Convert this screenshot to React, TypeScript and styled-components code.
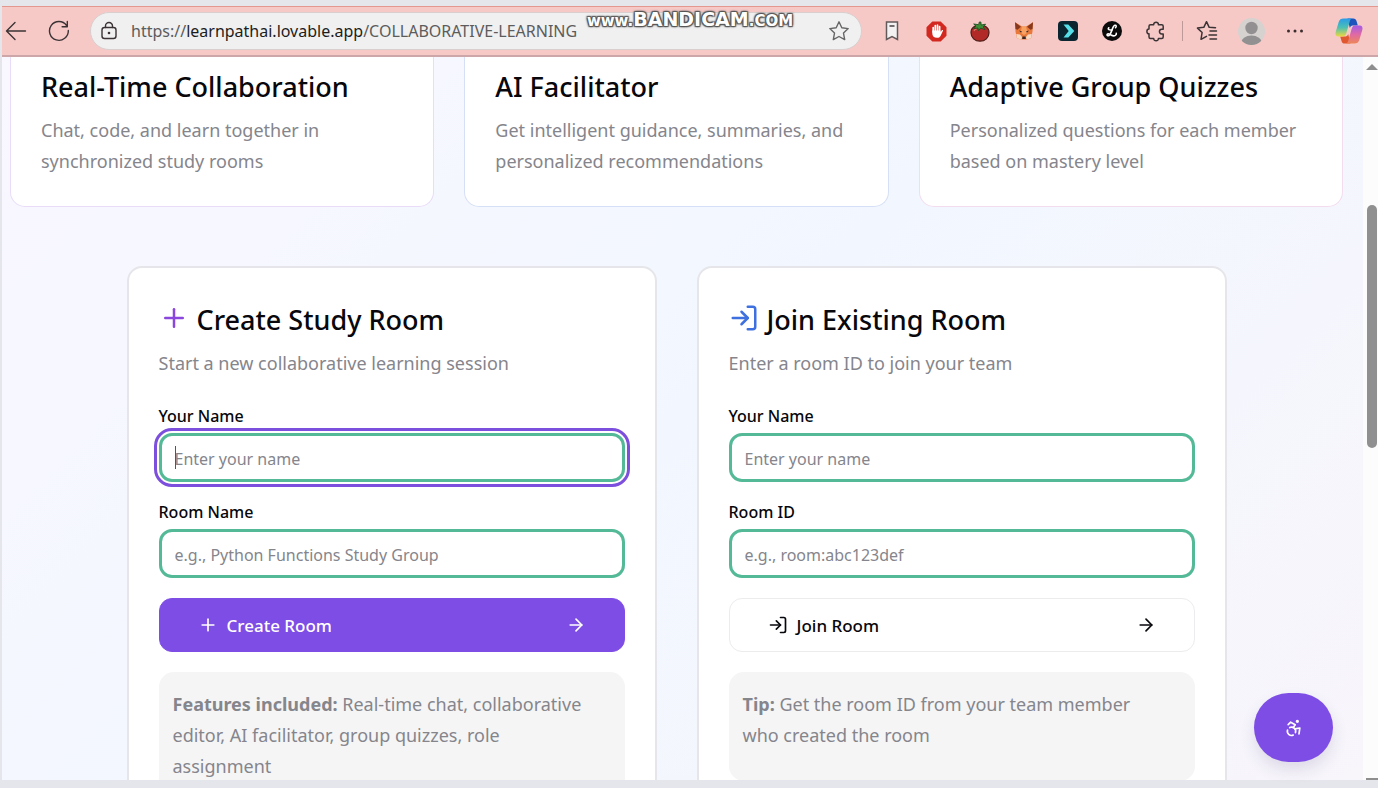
import React from "react";
import styled, { createGlobalStyle, css } from "styled-components";
import { Accessibility, ArrowRight, LogIn, Plus } from "lucide-react";

const GlobalStyle = createGlobalStyle`
  *, *::before, *::after { box-sizing: border-box; }
  body {
    margin: 0;
    background: #e5e6eb;
    color: #07070c;
    font-family: "Noto Sans", "Open Sans", sans-serif;
  }
  h2, h3, p { margin: 0; }
  button, input { font: inherit; color: inherit; }
  button { cursor: pointer; }
`;

const Browser = styled.div`
  display: flex;
  flex-direction: column;
  height: 100vh;
  padding: 6px 0 8px 2px;
  overflow: hidden;
`;

/* Browser toolbar */

const Toolbar = styled.header`
  position: relative;
  flex: none;
  display: flex;
  align-items: center;
  height: 51px;
  padding-right: 7px;
  background: #f6c9c7;
  border-top: 1px solid #e2978f;
  border-bottom: 2px solid #cda6a9;
`;

const ToolButton = styled.button<{ $width?: number }>`
  flex: none;
  display: grid;
  place-items: center;
  width: ${(p) => p.$width ?? 44}px;
  height: 40px;
  padding: 0;
  border: 0;
  background: none;
`;

const AddressBar = styled.div`
  flex: 1;
  min-width: 0;
  display: flex;
  align-items: center;
  height: 38px;
  margin: 0 8px 0 2px;
  background: #f0f0f0;
  border: 1px solid #d9cfcf;
  border-radius: 19px;
`;

const Url = styled.span`
  flex: 1;
  min-width: 0;
  margin-left: 4px;
  overflow: hidden;
  white-space: nowrap;
  font-size: 16px;
  line-height: 24px;
  color: #5c5c5c;

  b { font-weight: 400; color: #1d1d1d; }
`;

const ToolDivider = styled.span`
  flex: none;
  width: 1px;
  height: 20px;
  margin: 0 2px 0 4px;
  background: #bd9998;
`;

const CopilotSlot = styled.div`
  margin-left: 10px;
`;

const Watermark = styled.div`
  position: absolute;
  top: 2px;
  left: 0;
  right: 0;
  text-align: center;
  font-family: "DejaVu Sans", sans-serif;
  font-weight: 700;
  font-size: 15px;
  line-height: 20px;
  color: #fff;
  pointer-events: none;
  text-shadow: 1px 1px 1px #555, -1px -1px 1px #555, 1px -1px 1px #555,
    -1px 1px 1px #555, 0 0 3px #777, 0 0 3px #777;

  strong { font-size: 19px; }
  small { font-size: 15px; }
`;

/* Page viewport */

const Viewport = styled.div`
  position: relative;
  flex: 1;
  min-height: 0;
  display: flex;
`;

const Page = styled.main`
  flex: 1;
  min-width: 0;
  padding: 0 20px 0 8px;
  overflow: hidden;
  background: linear-gradient(135deg, #f9f7ff 0%, #f2f7ff 50%, #f8f5fb 100%);
`;

const Features = styled.section`
  display: grid;
  grid-template-columns: repeat(3, minmax(0, 1fr));
  gap: 30px;
`;

const FeatureCard = styled.article<{ $border: string }>`
  display: flex;
  flex-direction: column;
  gap: 8px;
  padding: 10px 30px 29px;
  background: #fff;
  border: 1px solid ${(p) => p.$border};
  border-top: 0;
  border-radius: 0 0 15px 15px;
`;

const Title = styled.h2`
  display: flex;
  align-items: center;
  gap: 8px;
  font-size: 27px;
  font-weight: 500;
  line-height: 40px;
  white-space: nowrap;

  svg { margin-bottom: 4px; }
`;

const Text = styled.p`
  font-size: 18px;
  line-height: 31px;
  color: #85858c;

  strong { font-weight: 700; }
`;

const Rooms = styled.section`
  display: grid;
  grid-template-columns: repeat(2, minmax(0, 1fr));
  gap: 40px;
  max-width: 1100px;
  margin: 59px auto 0;
`;

const RoomCard = styled.form`
  display: flex;
  flex-direction: column;
  padding: 32px 30px 40px;
  background: #fff;
  border: 2px solid #e6e6ea;
  border-radius: 15px;
`;

const CardHead = styled.header`
  display: flex;
  flex-direction: column;
  gap: 8px;
  margin-bottom: 27px;
`;

const Fields = styled.div`
  display: flex;
  flex-direction: column;
  gap: 20px;
`;

const Field = styled.div`
  display: flex;
  flex-direction: column;
  gap: 7px;
`;

const Label = styled.label`
  font-size: 16px;
  font-weight: 500;
  line-height: 20px;
`;

const InputWrap = styled.div`
  position: relative;
  display: flex;
`;

const Input = styled.input<{ $focused?: boolean }>`
  width: 100%;
  height: 49px;
  padding: 2px 13px 0;
  background: #fff;
  border: 3px solid #54b997;
  border-radius: 13px;
  font-size: 16px;
  outline: none;
  ${(p) =>
    p.$focused &&
    css`
      outline: 3px solid #7c4fdd;
      outline-offset: 2px;
    `}

  &::placeholder { color: #85858c; opacity: 1; }
`;

const Caret = styled.span`
  position: absolute;
  top: 13px;
  left: 16px;
  width: 1px;
  height: 23px;
  background: #555;
`;

const ActionButton = styled.button<{ $primary?: boolean }>`
  display: flex;
  align-items: center;
  gap: 9px;
  height: 54px;
  padding: 0 38px;
  font-size: 17px;
  font-weight: 500;
  color: ${(p) => (p.$primary ? "#fff" : "#07070c")};
  background: ${(p) => (p.$primary ? "#7e4de6" : "#fff")};
  border: 1px solid ${(p) => (p.$primary ? "#7e4de6" : "#ececef")};
  border-radius: 13px;

  svg:last-child { margin-left: auto; }
`;

const Note = styled.aside`
  min-height: 109px;
  padding: 17px 36px 16px 14px;
  background: #f5f5f6;
  border-radius: 15px;
`;

const AccessButton = styled.button`
  position: absolute;
  right: 45px;
  bottom: 18px;
  display: grid;
  place-items: center;
  width: 79px;
  height: 69px;
  padding: 0;
  color: #fff;
  background: #7e4de6;
  border: 0;
  border-radius: 35px;
  box-shadow: 0 8px 16px rgba(40, 30, 90, 0.12);
`;

const ScrollTrack = styled.div`
  flex: none;
  display: flex;
  flex-direction: column;
  align-items: center;
  width: 15px;
  padding: 7px 0 0 3px;
  background: #fcfcfc;
  overflow: hidden;
`;

const ScrollThumb = styled.div`
  width: 10px;
  height: 34%;
  margin-top: 135px;
  margin-bottom: auto;
  background: #909090;
  border-radius: 5px;
`;

const ScrollEnd = styled.div`
  width: 12px;
  height: 2px;
  background: #8e8e8e;
`;

/* Toolbar drawings */

const line = {
  fill: "none",
  stroke: "#3b3335",
  strokeWidth: 1.4,
  strokeLinecap: "round" as const,
  strokeLinejoin: "round" as const,
};

const BackIcon = () => (
  <svg width="22" height="22" viewBox="0 0 22 22" {...line}>
    <path d="M20.500 11H1.500M10 2.500 1.500 11l8.500 8.500" />
  </svg>
);

const ReloadIcon = () => (
  <svg width="22" height="22" viewBox="0 0 22 22" {...line}>
    <path d="M20.300 10.500A9.400 9.400 0 1 1 18.600 5.500M19.300 1.500v5.200h-5.200" />
  </svg>
);

const LockIcon = () => (
  <svg width="18" height="20" viewBox="0 0 18 20" {...line}>
    <rect x="2" y="6.500" width="14" height="11" rx="2.500" />
    <path d="M5.500 6.500V5a3.500 3.500 0 0 1 7 0v1.500" />
    <circle cx="9" cy="12" r="1.300" fill="#3b3335" stroke="none" />
  </svg>
);

const StarIcon = () => (
  <svg width="22" height="22" viewBox="0 0 22 22" {...line} stroke="#666">
    <path d="m11 1.800 2.800 5.900 6.400.9-4.700 4.500 1.200 6.500-5.700-3.100-5.700 3.100 1.200-6.500L1.800 8.600l6.400-.9z" />
  </svg>
);

const BookmarkIcon = () => (
  <svg width="14" height="20" viewBox="0 0 14 20">
    <path d="M1.500 1h11v17.500L7 15.500 1.500 18.500z" fill="#f2f2f2" stroke="#62595a" strokeWidth="1.500" />
    <path d="M4.500 5h5" stroke="#3b3335" strokeWidth="1.400" />
  </svg>
);

const BlockerIcon = () => (
  <svg width="21" height="21" viewBox="0 0 21 21">
    <path d="M6.300.5h8.400l5.800 5.800v8.400l-5.800 5.800H6.300L.5 14.700V6.300z" fill="#d2281f" />
    <g stroke="#fff" strokeWidth="1.700" strokeLinecap="round">
      <path d="M7.200 11V6.500M9.300 10V4.600M11.500 10V4.200M13.600 11V5.600" />
    </g>
    <path d="M6.300 9.500h8.200v1.800l1.300-2.100c.5-.6 1.400-.2 1.200.6l-2.500 5.200c-.7 1.300-1.700 1.800-3.500 1.800-3 0-4.700-1.600-4.700-4.300z" fill="#fff" />
  </svg>
);

const TomatoIcon = () => (
  <svg width="20" height="21" viewBox="0 0 20 21">
    <path d="M10 5.500c5-2 9 1 9 6.200 0 5-4 8.500-9 8.500s-9-3.500-9-8.500c0-5.200 4-8.200 9-6.200z" fill="#b22a27" stroke="#4b1f19" strokeWidth="1.200" />
    <path d="M4 10c.6-1.400 1.500-2 2.700-2.100" stroke="#db7068" strokeWidth="1.200" fill="none" />
    <path d="M9.300 1h1.500l.4 3 4.300-.8-2.200 2.600 1.500 2.800-4.100-1.500L8.500 9.500 7.800 7 4 7.500 6 5 3.700 3l5 .7z" fill="#3b8f35" stroke="#204c20" strokeWidth=".9" />
  </svg>
);

const FoxIcon = () => (
  <svg width="20" height="20" viewBox="0 0 20 20">
    <path d="m1 1.200 7 4.300h4l7-4.300-.5 9.300-1.300 6.500-3.700 1.500h-7L2.800 17 1.500 10.500z" fill="#e9793a" />
    <path d="m1 1.200 6 4.500-3.500 3L1.500 8zM19 1.200l-6 4.500 3.500 3 2-.7z" fill="#87381f" />
    <path d="m8 5.500-1.500 6L10 14l3.500-2.500-1.500-6z" fill="#f7a263" />
    <path d="m2.300 13 3.700.5L8 16l-.5 2.500h-1L2.800 17zM17.700 13l-3.700.5-2 2.500.5 2.500h1l3.700-1.500z" fill="#f5d9c3" />
    <path d="m5 9.500 3 1-1 1.300zM15 9.500l-3 1 1 1.300zM8.500 15.500h3l.3 2.500H8.200z" fill="#32272a" />
  </svg>
);

const ChevronAppIcon = () => (
  <svg width="20" height="20" viewBox="0 0 20 20">
    <rect width="20" height="20" rx="4" fill="#0b2530" />
    <path d="M5.500 3.500h4.800l6 6.500-6 6.500H5.500l5.200-6.500z" fill="#55dfe8" />
  </svg>
);

const ScriptAppIcon = () => (
  <svg width="20" height="20" viewBox="0 0 20 20">
    <circle cx="10" cy="10" r="10" fill="#0c0b0c" />
    <path d="M13.500 6.700c1.200-1.200.8-2.700-.6-2.400C10 5 9.500 14.500 6.300 14.700c-1.800 0-1.500-2 0-1.800 2.700.4 4.500 3.200 7 1.500.8-.6 1.200-1.400 1-2.200M10.300 8.800c-2.800.6-5-.4-3.500-2" fill="none" stroke="#fff" strokeWidth="1.600" strokeLinecap="round" />
  </svg>
);

const PuzzleIcon = () => (
  <svg width="20" height="21" viewBox="0 0 20 21" {...line} strokeWidth={1.5}>
    <path d="M4.500 3.700h3.200c-.2-3.200 5-3.200 4.700 0h3.300q1.500 0 1.500 1.500v3h-1.500c-3 0-3 4.700 0 4.700h1.500v3q0 1.500-1.500 1.500h-3.300c.3 3.200-4.900 3.200-4.700 0H4.500Q3 17.400 3 15.900v-3.100c-2.800 0-2.800-4.700 0-4.700V5.200q0-1.500 1.500-1.500z" />
  </svg>
);

const FavoritesIcon = () => (
  <svg width="22" height="22" viewBox="0 0 22 22" {...line} strokeWidth={1.5}>
    <path d="M19.500 7.800 13.200 7.300 10.500 1.700 7.800 7.300l-6.300.8 4.600 4.400-1.100 6.800 5.500-3M14 11h6.500M13 15h7.500M14 19h6.500" />
  </svg>
);

const AvatarIcon = () => (
  <svg width="27" height="27" viewBox="0 0 27 27">
    <defs>
      <clipPath id="avatar-disc"><circle cx="13.500" cy="13.500" r="13.500" /></clipPath>
    </defs>
    <g clipPath="url(#avatar-disc)">
      <rect width="27" height="27" fill="#d5d2d0" />
      <circle cx="13.500" cy="10" r="6.200" fill="#929090" />
      <ellipse cx="13.500" cy="25" rx="10.500" ry="7.500" fill="#929090" />
    </g>
  </svg>
);

const DotsIcon = () => (
  <svg width="18" height="4" viewBox="0 0 18 4" fill="#3b2d2f">
    <circle cx="2.500" cy="2" r="1.500" />
    <circle cx="9" cy="2" r="1.500" />
    <circle cx="15.500" cy="2" r="1.500" />
  </svg>
);

const CopilotIcon = () => (
  <svg width="28" height="26" viewBox="0 0 28 26">
    <defs>
      <linearGradient id="cp-left" x1="0" y1="0" x2="0" y2="1">
        <stop offset="0" stopColor="#2a9be9" />
        <stop offset=".5" stopColor="#4cc0b5" />
        <stop offset="1" stopColor="#ecd83e" />
      </linearGradient>
      <linearGradient id="cp-right" x1="0" y1="0" x2="0" y2="1">
        <stop offset="0" stopColor="#a55be6" />
        <stop offset=".5" stopColor="#df6aa4" />
        <stop offset="1" stopColor="#ee8758" />
      </linearGradient>
    </defs>
    <path d="M12.500.5h5.700c2 0 2.800 1 3.300 2.600l1.300 4.400h-4.300c-2 0-3 .6-3.700 2.600z" fill="#1e52bd" />
    <path d="M15.500 25.500H9.800c-2 0-2.800-1-3.300-2.600L5.200 18.500h4.300c2 0 3-.6 3.700-2.600z" fill="#e0582f" />
    <path d="M8.500.5h9.200c-1.700 0-2.500 1.300-3 3l-3.300 11.600c-.7 2.300-1.700 3.400-4 3.400H3.500C.8 18.500 0 16.500.7 14L3.700 4C4.500 1.600 6 .5 8.500.5z" fill="url(#cp-left)" />
    <path d="M19.500 25.500h-9.200c1.700 0 2.500-1.300 3-3l3.300-11.600c.7-2.300 1.700-3.400 4-3.400h3.900c2.700 0 3.500 2 2.800 4.500l-3 10c-.8 2.400-2.300 3.500-4.800 3.500z" fill="url(#cp-right)" />
  </svg>
);

const UpArrow = () => (
  <svg width="12" height="6" viewBox="0 0 12 6">
    <path d="M6 0 12 6H0z" fill="#8e8e8e" />
  </svg>
);

const extensions = [
  { name: "Saved pages", Icon: BookmarkIcon },
  { name: "Ad blocker", Icon: BlockerIcon },
  { name: "Tomato timer", Icon: TomatoIcon },
  { name: "Fox wallet", Icon: FoxIcon },
  { name: "Code helper", Icon: ChevronAppIcon },
  { name: "Locator", Icon: ScriptAppIcon },
  { name: "Extensions", Icon: PuzzleIcon },
];

const features = [
  {
    title: "Real-Time Collaboration",
    text: "Chat, code, and learn together in synchronized study rooms",
    border: "#e8dcf8",
  },
  {
    title: "AI Facilitator",
    text: "Get intelligent guidance, summaries, and personalized recommendations",
    border: "#d5dff5",
  },
  {
    title: "Adaptive Group Quizzes",
    text: "Personalized questions for each member based on mastery level",
    border: "#f3dcee",
  },
];

type TextFieldProps = { id: string; label: string; placeholder: string; focused?: boolean };

const TextField = ({ id, label, placeholder, focused }: TextFieldProps) => (
  <Field>
    <Label htmlFor={id}>{label}</Label>
    <InputWrap>
      <Input id={id} type="text" placeholder={placeholder} $focused={focused} />
      {focused && <Caret />}
    </InputWrap>
  </Field>
);

export default function App() {
  return (
    <Browser>
      <GlobalStyle />
      <Toolbar>
        <ToolButton $width={28} aria-label="Back"><BackIcon /></ToolButton>
        <ToolButton $width={58} aria-label="Reload"><ReloadIcon /></ToolButton>
        <AddressBar>
          <ToolButton $width={36} aria-label="Site information"><LockIcon /></ToolButton>
          <Url>https://<b>learnpathai.lovable.app</b>/COLLABORATIVE-LEARNING</Url>
          <ToolButton aria-label="Add to favorites"><StarIcon /></ToolButton>
        </AddressBar>
        {extensions.map(({ name, Icon }) => (
          <ToolButton key={name} aria-label={name}><Icon /></ToolButton>
        ))}
        <ToolDivider />
        <ToolButton aria-label="Favorites"><FavoritesIcon /></ToolButton>
        <ToolButton aria-label="Profile"><AvatarIcon /></ToolButton>
        <ToolButton aria-label="Settings and more"><DotsIcon /></ToolButton>
        <CopilotSlot>
          <ToolButton aria-label="Copilot"><CopilotIcon /></ToolButton>
        </CopilotSlot>
        <Watermark>www.<strong>BANDICAM</strong>.<small>COM</small></Watermark>
      </Toolbar>

      <Viewport>
        <Page>
          <Features>
            {features.map((f) => (
              <FeatureCard key={f.title} $border={f.border}>
                <Title>{f.title}</Title>
                <Text>{f.text}</Text>
              </FeatureCard>
            ))}
          </Features>

          <Rooms>
            <RoomCard onSubmit={(e) => e.preventDefault()}>
              <CardHead>
                <Title><Plus size={30} color="#8b46dd" />Create Study Room</Title>
                <Text>Start a new collaborative learning session</Text>
              </CardHead>
              <Fields>
                <TextField id="create-name" label="Your Name" placeholder="Enter your name" focused />
                <TextField id="room-name" label="Room Name" placeholder="e.g., Python Functions Study Group" />
                <ActionButton type="submit" $primary>
                  <Plus size={20} />Create Room<ArrowRight size={20} />
                </ActionButton>
                <Note>
                  <Text>
                    <strong>Features included:</strong> Real-time chat, collaborative editor, AI
                    facilitator, group quizzes, role assignment
                  </Text>
                </Note>
              </Fields>
            </RoomCard>

            <RoomCard onSubmit={(e) => e.preventDefault()}>
              <CardHead>
                <Title><LogIn size={30} color="#3f70e0" />Join Existing Room</Title>
                <Text>Enter a room ID to join your team</Text>
              </CardHead>
              <Fields>
                <TextField id="join-name" label="Your Name" placeholder="Enter your name" />
                <TextField id="room-id" label="Room ID" placeholder="e.g., room:abc123def" />
                <ActionButton type="submit">
                  <LogIn size={20} />Join Room<ArrowRight size={20} />
                </ActionButton>
                <Note>
                  <Text>
                    <strong>Tip:</strong> Get the room ID from your team member who created the room
                  </Text>
                </Note>
              </Fields>
            </RoomCard>
          </Rooms>
        </Page>
        <ScrollTrack>
          <UpArrow />
          <ScrollThumb />
          <ScrollEnd />
        </ScrollTrack>
        <AccessButton aria-label="Accessibility options"><Accessibility size={20} /></AccessButton>
      </Viewport>
    </Browser>
  );
}
